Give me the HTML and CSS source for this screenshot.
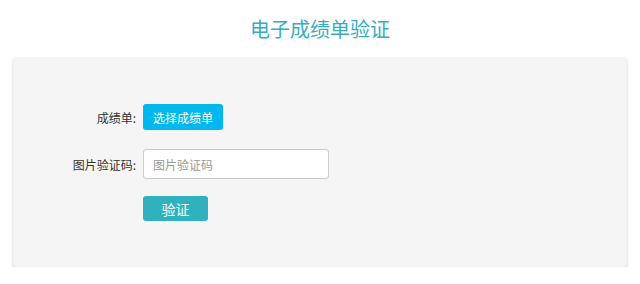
FILE: index.html
```html
<!DOCTYPE html>
<html lang="zh">
<head>
<meta charset="utf-8">
<link rel="stylesheet" href="styles.css">
</head>
<body>
<h1 class="title">电子成绩单验证</h1>
<div class="panel">
  <div class="row row-file">
    <label class="label">成绩单:</label>
    <button class="btn btn-file">选择成绩单</button>
  </div>
  <div class="row row-code">
    <label class="label">图片验证码:</label>
    <input class="input" type="text" placeholder="图片验证码">
  </div>
  <div class="row row-submit">
    <span class="label"></span>
    <button class="btn btn-submit">验证</button>
  </div>
</div>
</body>
</html>
```
FILE: styles.css
```css
* { box-sizing: border-box; }
html, body { margin: 0; padding: 0; background: #fff; }
body {
  font-family: "Microsoft YaHei", "Noto Sans CJK SC", "Noto Sans", sans-serif;
  color: #333;
}
.title {
  margin: 0;
  height: 57px;
  padding-top: 15px;
  text-align: center;
  font-size: 20px;
  line-height: 28px;
  font-weight: normal;
  color: #36adbf;
}
.panel {
  margin: 0 13px;
  height: 210px;
  background: #f5f5f5;
  border-radius: 4px;
  box-shadow: 0 2px 3px rgba(0,0,0,0.2);
  padding-top: 47px;
}
.row {
  display: flex;
  align-items: center;
  gap: 7px;
}
.label {
  width: 123px;
  text-align: right;
  font-size: 12px;
  color: #333;
}
.row-code { margin-top: 19px; }
.row-submit { margin-top: 17px; }
.btn {
  border: none;
  border-radius: 3px;
  color: #fff;
  font-family: inherit;
  cursor: pointer;
  padding: 0;
}
.btn-file {
  width: 80px;
  height: 26px;
  background: #00b7ee;
  font-size: 12px;
}
.input {
  width: 186px;
  height: 30px;
  border: 1px solid #ccc;
  border-radius: 3px;
  background: #fff;
  padding: 0 9px;
  font-size: 12px;
  font-family: inherit;
}
.input::placeholder { color: #999; }
.btn-submit {
  width: 65px;
  height: 25px;
  background: #2fb2bd;
  font-size: 14px;
}
```
